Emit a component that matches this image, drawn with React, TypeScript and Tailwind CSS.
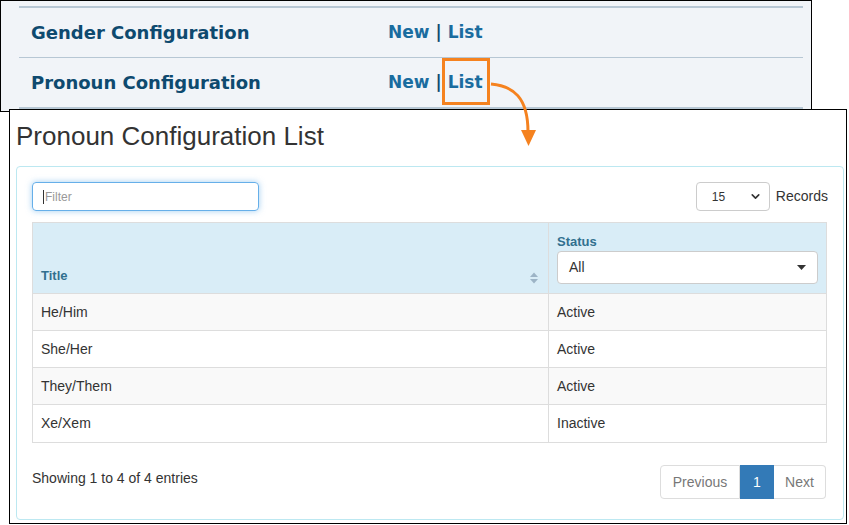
import { ChevronDown } from "lucide-react"

// Collage: a cropped admin menu on top, the list page below, joined by an orange arrow

const rows = [
  { title: "He/Him", status: "Active" },
  { title: "She/Her", status: "Active" },
  { title: "They/Them", status: "Active" },
  { title: "Xe/Xem", status: "Inactive" },
]

function MenuRow({ title, last, highlight }: { title: string; last?: boolean; highlight?: boolean }) {
  return (
    <div
      className={`flex items-center ${last ? "h-[51px] border-b-2" : "h-[50px] border-b"} border-[#b7c7d4]`}
      style={{ fontFamily: '"DejaVu Sans", Verdana, sans-serif' }}
    >
      <div className="w-[369px] pl-3 text-[18px] font-bold text-[#0e4a6f]">{title}</div>
      <div className="flex items-center text-[17px] font-bold text-[#1a6c9f]">
        <span>New</span>
        <span className="mx-[6px] text-[#0e4a6f]">|</span>
        <span className={highlight ? "relative" : ""}>
          List
          {highlight && (
            <span className="absolute left-[-6px] right-[-7px] top-[-12px] bottom-[-10px] border-[3px] border-[#f5821f]" />
          )}
        </span>
      </div>
    </div>
  )
}

function SortIcon() {
  return (
    <svg width="10" height="12" viewBox="0 0 10 12" className="text-[#9db4c6]">
      <path d="M5 0.5 L9 5 H1 Z" fill="currentColor" />
      <path d="M5 11.5 L9 7 H1 Z" fill="currentColor" />
    </svg>
  )
}

export default function App() {
  return (
    <div className="relative w-[849px] h-[525px] bg-white overflow-hidden">
      {/* top crop: configuration menu */}
      <div className="w-[812px] h-[112px] border border-black bg-[#f1f4f8] pl-[18px] pr-[8px] pt-[5px]">
        <div className="border-t-2 border-[#b7c7d4]">
          <MenuRow title="Gender Configuration" />
          <MenuRow title="Pronoun Configuration" last highlight />
        </div>
      </div>

      {/* bottom crop: list page */}
      <div
        className="relative z-10 -mt-[3px] ml-[9px] w-[838px] h-[415px] border border-black bg-white pl-[6px] text-[#333]"
        style={{ fontFamily: '"Liberation Sans", Arial, sans-serif' }}
      >
        <div className="h-[56px] pt-[11px] text-[26px] leading-[30px] text-[#333]">Pronoun Configuration List</div>

        <div className="w-[828px] h-[354px] border border-[#bce8f1] rounded pt-[15px] pl-[15px] pr-[16px]">
          <div className="flex items-center justify-between h-[29px]">
            <div className="relative w-[227px] h-[29px] border border-[#66afe9] rounded shadow-[0_0_6px_rgba(102,175,233,0.6)] flex items-center pl-[10px]">
              <span className="w-px h-[14px] bg-[#333] mr-[1px]" />
              <span className="text-[12px] text-[#999]">Filter</span>
            </div>
            <div className="flex items-center">
              <div className="w-[74px] h-[29px] border border-[#ccc] rounded flex items-center justify-between pl-[15px] pr-[7px] text-[12px] text-[#333]">
                <span>15</span>
                <ChevronDown size={13} strokeWidth={3} className="text-[#333]" />
              </div>
              <span className="ml-[6px] mr-[-1px] text-[14px] text-[#333]">Records</span>
            </div>
          </div>

          <div className="mt-[11px] border border-[#ddd] text-[14px]">
            <div className="flex h-[71px] bg-[#d9edf7] border-b border-[#ddd] text-[13px] font-bold text-[#31708f]">
              <div className="w-[516px] flex items-end justify-between pl-[8px] pr-[9px] pb-[8px] border-r border-[#ddd]">
                <span>Title</span>
                <span className="mb-[1px]"><SortIcon /></span>
              </div>
              <div className="flex-1 pl-[8px] pr-[8px] pt-[10px]">
                <div className="leading-[17px]">Status</div>
                <div className="mt-[1px] h-[33px] bg-white border border-[#ccc] rounded flex items-center justify-between pl-[11px] pr-[11px] text-[14px] font-normal text-[#333]">
                  <span>All</span>
                  <svg width="9" height="5" viewBox="0 0 9 5"><path d="M0 0 H9 L4.5 5 Z" fill="#333" /></svg>
                </div>
              </div>
            </div>
            {rows.map((r, i) => (
              <div
                key={r.title}
                className={`flex h-[37px] ${i < rows.length - 1 ? "border-b border-[#ddd]" : ""} ${i % 2 === 0 ? "bg-[#f9f9f9]" : "bg-white"}`}
              >
                <div className="w-[516px] flex items-center pl-[8px] border-r border-[#ddd]">{r.title}</div>
                <div className="flex-1 flex items-center pl-[8px]">{r.status}</div>
              </div>
            ))}
          </div>

          <div className="mt-[22px] flex items-start justify-between">
            <span className="mt-[3px] text-[14px] leading-[20px] text-[#333]">Showing 1 to 4 of 4 entries</span>
            <div className="flex h-[34px] text-[14px] mr-[1px]">
              <span className="w-[80px] flex items-center justify-center border border-[#ddd] rounded-l text-[#777]">Previous</span>
              <span className="w-[34px] flex items-center justify-center bg-[#337ab7] border border-[#337ab7] text-white">1</span>
              <span className="w-[52px] flex items-center justify-center border border-l-0 border-[#ddd] rounded-r text-[#777]">Next</span>
            </div>
          </div>
        </div>
      </div>

      {/* orange call-out arrow */}
      <svg className="absolute left-0 top-0 z-20 pointer-events-none" width="849" height="525">
        <path d="M491 84 C 513 86, 528 97, 528 132" stroke="#f5821f" strokeWidth="3" fill="none" />
        <path d="M521 130 L536 130 L528.5 146 Z" fill="#f5821f" />
      </svg>
    </div>
  )
}
